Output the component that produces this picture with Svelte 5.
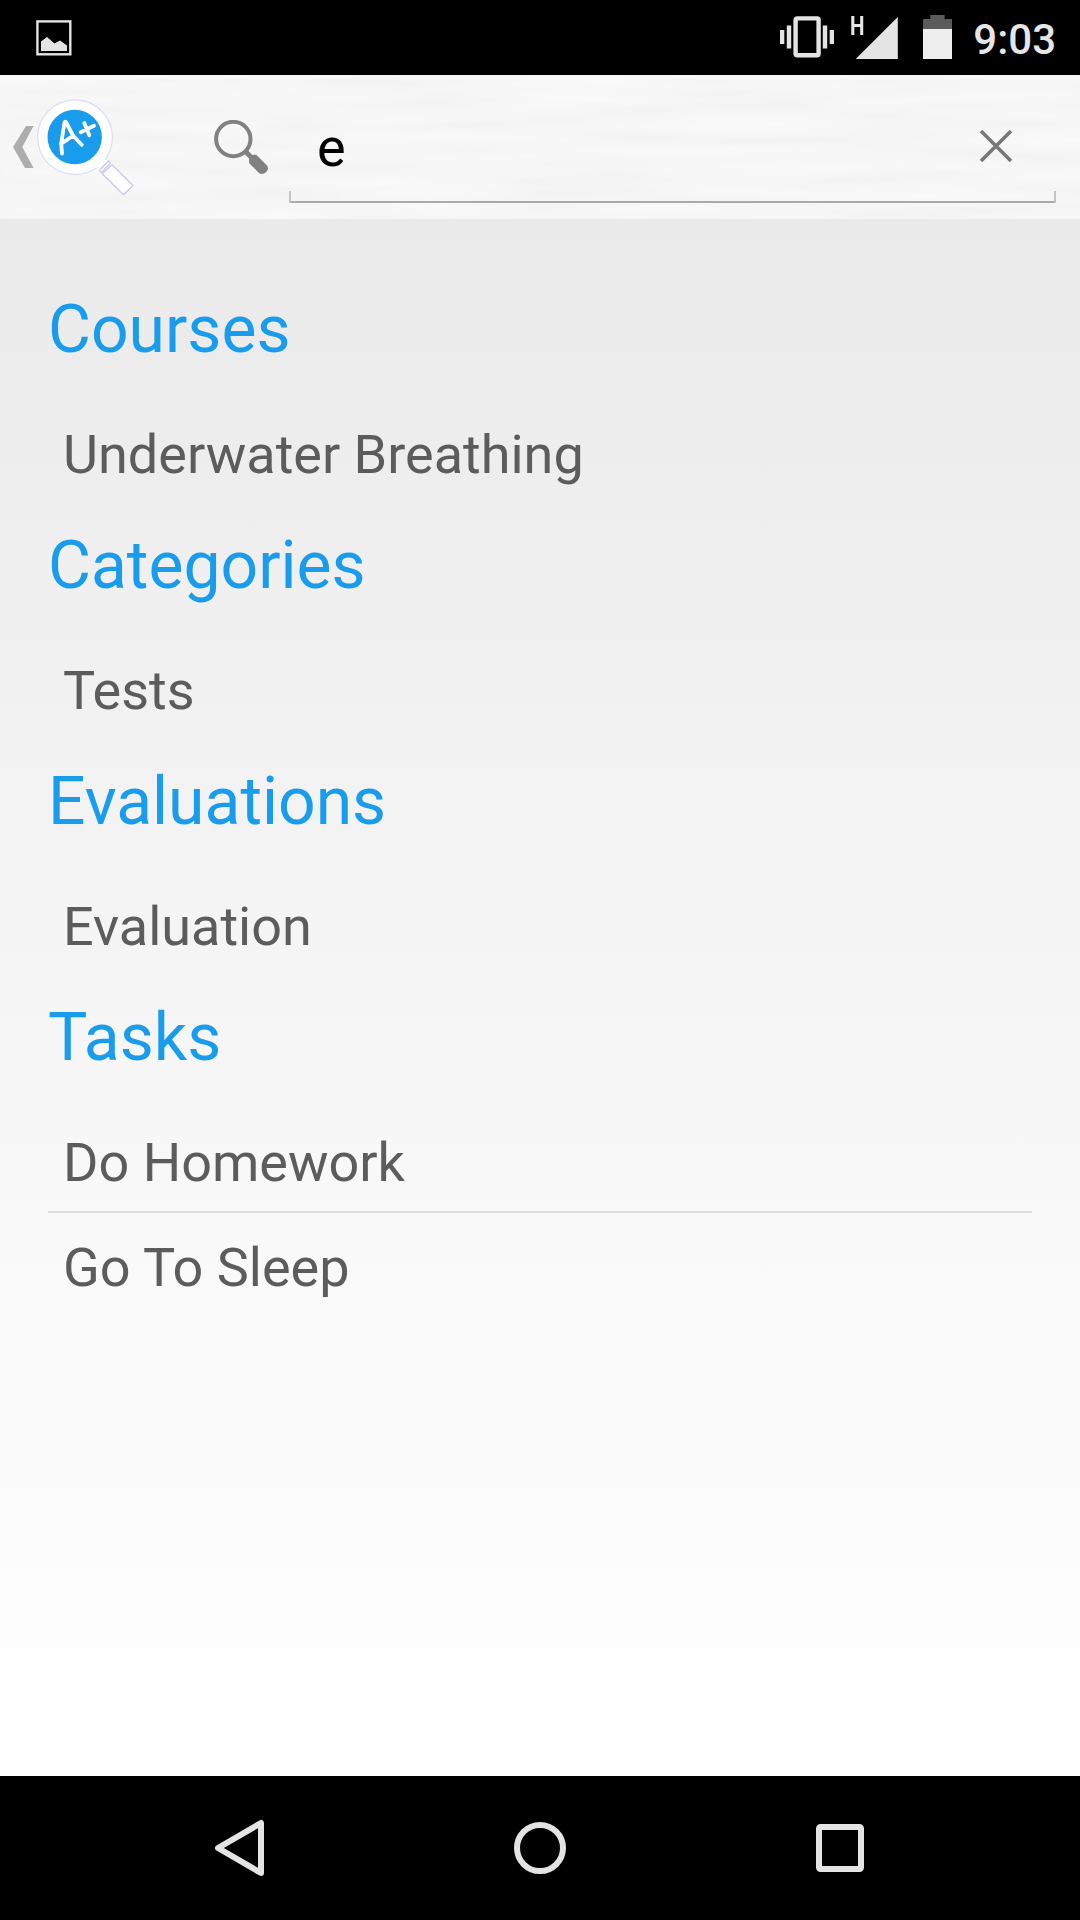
<script>
  const sections = [
    { title: 'Courses', items: ['Underwater Breathing'] },
    { title: 'Categories', items: ['Tests'] },
    { title: 'Evaluations', items: ['Evaluation'] },
    { title: 'Tasks', items: ['Do Homework', 'Go To Sleep'] }
  ];
  let query = $state('e');
</script>

<div class="screen">
  <div class="status">
    <svg class="photo" viewBox="0 0 36 36" aria-hidden="true">
      <rect x="1.4" y="1.4" width="32.9" height="32.9" fill="none" stroke="#e4e4e4" stroke-width="2.4" />
      <path d="M5 31V21.500L11 17l7.500 6.500 5.500-3 7 5V31z" fill="#e4e4e4" />
    </svg>
    <div class="indicators">
      <svg class="vibrate" viewBox="0 0 54 42" fill="#e4e4e4" aria-hidden="true">
        <rect x="0" y="14" width="4.300" height="14" />
        <rect x="6.800" y="9.500" width="4.400" height="23" />
        <rect x="15.600" y="2.400" width="23" height="36.800" rx="1.500" fill="none" stroke="#e4e4e4" stroke-width="4.400" />
        <rect x="42.800" y="9.500" width="4.400" height="23" />
        <rect x="49.700" y="14" width="4.300" height="14" />
      </svg>
      <div class="signal">
        <span class="net">H</span>
        <svg viewBox="0 0 48 42" aria-hidden="true"><path d="M4.700 42L46.800 0v42z" fill="#e4e4e4" /></svg>
      </div>
      <svg class="battery" viewBox="0 0 29 44" aria-hidden="true">
        <path d="M0 4h7.300V0h14.300v4H29v10H0z" fill="#5b5b5b" />
        <rect y="14" width="29" height="30" fill="#eee" />
      </svg>
      <span class="time">9:03</span>
    </div>
  </div>

  <header>
    <svg class="texture" width="1080" height="144" aria-hidden="true">
      <filter id="brushed" x="0" y="0" width="100%" height="100%" color-interpolation-filters="sRGB">
        <feTurbulence type="fractalNoise" baseFrequency="0.006 0.07" numOctaves="2" seed="4" />
        <feColorMatrix values="0.035 0 0 0 0.948  0.035 0 0 0 0.948  0.035 0 0 0 0.948  0 0 0 0 1" />
      </filter>
      <rect width="1080" height="144" filter="url(#brushed)" />
    </svg>
    <svg class="back" viewBox="0 0 22 42" aria-hidden="true"><path d="M13 0h7.600L9.300 21l11.300 21H12L0 21z" fill="#adadad" /></svg>
    <svg class="logo" viewBox="0 0 98 98" aria-hidden="true">
      <circle cx="38" cy="38.200" r="37.400" fill="#fff" stroke="#d9def3" stroke-width="1.200" />
      <path d="M57 67l8-9 6 5-8 9z" fill="#fff" />
      <g fill="#fff" stroke="#c3c8e8" stroke-width="1.200" stroke-linejoin="round">
        <path d="M62.500 71.500l9-9.500 2 2-9 9.700z" />
        <path d="M75.300 65.800L96 86.500l-9.500 9.300L65.200 74.700z" />
      </g>
      <circle cx="37.700" cy="38" r="27.200" fill="#189ceb" />
      <path d="M25 54.500l-.8-10L27.500 23.500c.6-1.200 1.500-.8 2 .5L36 36.500l8.700 9.300M23.900 45L36.300 36.500M43.700 33.300L57 26.800M47.300 24l5 12.300" fill="none" stroke="#fff" stroke-width="3.800" stroke-linecap="round" stroke-linejoin="round" />
    </svg>
    <svg class="search" viewBox="0 0 54 54" aria-hidden="true">
      <circle cx="19.300" cy="19" r="17.200" fill="none" stroke="#818181" stroke-width="4" />
      <path d="M30.500 30.500l7 7" stroke="#818181" stroke-width="5" />
      <path d="M42.500 34.900L53 45.500Q55 48.500 53 51L51 53Q47.500 55 45 53L35.500 43.500Q34.500 41.500 35.500 37.200Q39.500 33.500 42.500 34.900z" fill="#818181" />
    </svg>
    <div class="field">
      <span class="query">{query}</span>
      <svg class="clear" viewBox="0 0 34 34" aria-hidden="true"><path d="M2 2l30 30M32 2L2 32" stroke="#787878" stroke-width="3.600" /></svg>
    </div>
  </header>

  <main>
    {#each sections as section}
      <section>
        <h2>{section.title}</h2>
        <ul>
          {#each section.items as item}
            <li>{item}</li>
          {/each}
        </ul>
      </section>
    {/each}
  </main>

  <nav>
    <svg viewBox="0 0 60 60" aria-hidden="true"><path d="M51 5v50L8 30z" /></svg>
    <svg viewBox="0 0 60 60" aria-hidden="true"><circle cx="30" cy="30" r="23" /></svg>
    <svg viewBox="0 0 60 60" aria-hidden="true"><rect x="9" y="9" width="42" height="42" rx="1.500" /></svg>
  </nav>
</div>

<style>
  :global(body) {
    margin: 0;
    background: #000;
  }
  .screen {
    width: 1080px;
    height: 1920px;
    display: flex;
    flex-direction: column;
    overflow: hidden;
    font-family: Roboto, sans-serif;
  }
  svg {
    display: block;
    flex: none;
  }
  .status {
    height: 75px;
    flex: none;
    box-sizing: border-box;
    padding: 0 24px 0 36px;
    display: flex;
    justify-content: space-between;
    background: #000;
    color: #e6e6e6;
  }
  .photo {
    width: 36px;
    height: 36px;
    margin-top: 20px;
  }
  .indicators {
    display: flex;
    align-items: flex-start;
  }
  .vibrate {
    width: 54px;
    height: 42px;
    margin: 16px 16px 0 0;
  }
  .signal {
    display: flex;
    margin-right: 24px;
  }
  .signal svg {
    width: 48px;
    height: 42px;
    margin: 17px 0 0 -12px;
  }
  .net {
    width: 13px;
    font-size: 25px;
    font-weight: 700;
    line-height: 30px;
    margin-top: 12px;
    transform: scaleX(0.82);
    transform-origin: left;
  }
  .battery {
    width: 29px;
    height: 44px;
    margin: 15px 21px 0 0;
  }
  .time {
    font-size: 42px;
    font-weight: 500;
    line-height: 50px;
    margin-top: 15px;
  }
  header {
    position: relative;
    height: 144px;
    flex: none;
    display: flex;
    align-items: flex-start;
    background: #f6f6f6;
  }
  .texture {
    position: absolute;
    inset: 0;
  }
  .back,
  .logo,
  .search,
  .field {
    position: relative;
  }
  .back {
    width: 22px;
    height: 42px;
    margin: 51px 2px 0 13px;
  }
  .logo {
    width: 98px;
    height: 98px;
    margin-top: 24px;
  }
  .search {
    width: 54px;
    height: 54px;
    margin: 45px 0 0 79px;
  }
  .field {
    box-sizing: border-box;
    width: 767px;
    height: 128px;
    margin-left: 21px;
    padding: 0 43.500px 0 28px;
    display: flex;
    justify-content: space-between;
    background:
      linear-gradient(#c4c4c4, #c4c4c4) left bottom / 2px 12px no-repeat,
      linear-gradient(#c4c4c4, #c4c4c4) right bottom / 2px 12px no-repeat,
      linear-gradient(#aaa, #aaa) left bottom / 100% 2px no-repeat;
  }
  .query {
    font-size: 54px;
    line-height: 63px;
    margin-top: 41px;
    color: #000;
  }
  .clear {
    width: 34px;
    height: 34px;
    margin-top: 53.500px;
  }
  main {
    flex: 1;
    padding: 48px 48px 0;
    background: linear-gradient(#eaeaea, #f0f0f0 25%, #fafafa 71%, #fff);
  }
  h2 {
    margin: 0;
    padding: 24px 0 32px;
    font-size: 66px;
    font-weight: 400;
    line-height: 77px;
    color: #189ceb;
  }
  ul {
    margin: 0;
    padding: 0;
    list-style: none;
  }
  li {
    padding: 6px 15px 0;
    font-size: 54px;
    line-height: 97px;
    color: #5c5c5c;
  }
  li + li {
    border-top: 2px solid #dedede;
  }
  nav {
    height: 144px;
    flex: none;
    display: flex;
    align-items: center;
    justify-content: center;
    gap: 240px;
    background: #000;
  }
  nav svg {
    width: 60px;
    height: 60px;
    fill: none;
    stroke: #e4e4e4;
    stroke-width: 6;
    stroke-linejoin: round;
  }
</style>
